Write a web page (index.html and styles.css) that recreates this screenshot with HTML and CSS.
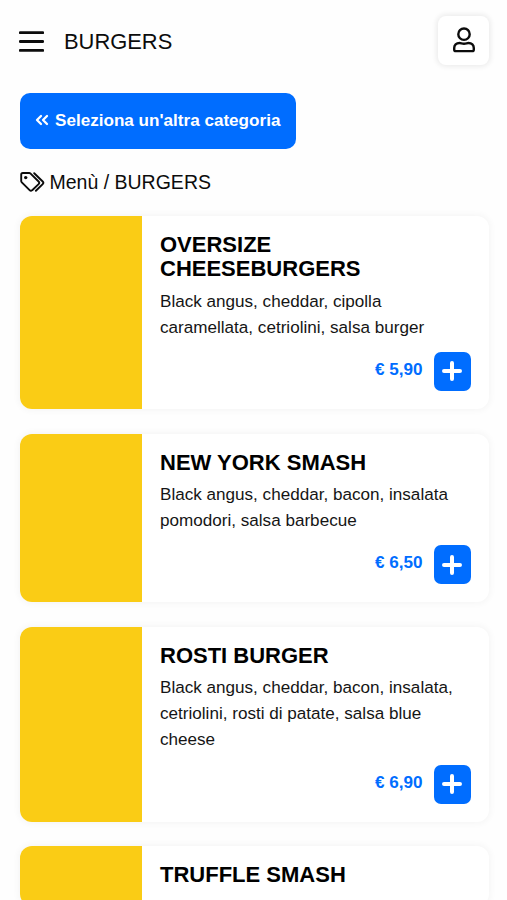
FILE: index.html
```html
<!DOCTYPE html>
<html lang="it">
<head>
<meta charset="utf-8">
<meta name="viewport" content="width=device-width, initial-scale=1">
<title>BURGERS</title>
<link rel="stylesheet" href="styles.css">
</head>
<body>
<svg class="sprite" aria-hidden="true">
  <symbol id="plus" viewBox="0 0 20 20"><path d="M10 2v16M2 10h16" fill="none" stroke="currentColor" stroke-width="4" stroke-linecap="round"/></symbol>
</svg>
<header class="topbar">
  <svg class="menu-icon" viewBox="0 0 24 22"><path d="M1.200 2.500h21.600M1.200 11h21.600M1.200 19.500h21.600"/></svg>
  <h1 class="page-title">BURGERS</h1>
  <button class="account" aria-label="Account">
    <svg class="user-icon" viewBox="0 0 24 26"><circle cx="12" cy="7.200" r="5.700"/><path d="M7.600 16C4.200 16 2.200 18.200 2.200 21v1.400c0 1 .7 1.700 1.700 1.700h16.200c1 0 1.700-.7 1.700-1.700V21c0-2.800-2-5-5.400-5-1.400 0-2.400.7-4.400.7S9 16 7.600 16z"/></svg>
  </button>
</header>
<main>
  <a class="back"><svg class="chevrons" viewBox="0 0 14 12"><path d="M6 2L2 6l4 4M12 2L8 6l4 4"/></svg><span>Seleziona un'altra categoria</span></a>
  <nav class="crumbs">
    <svg class="tags-icon" viewBox="0 0 25 20"><path d="M1.200 2.600v6.300c0 .6.2 1 .6 1.400l7.800 7.900c.8.8 1.800.8 2.600 0l6.400-6.100c.8-.8.8-1.800 0-2.600l-8-7.900c-.4-.4-.8-.6-1.400-.6H2.800c-.9 0-1.600.7-1.600 1.600z"/><path d="M14.200 1.200l8.500 8.300c.8.8.8 1.800 0 2.600L15.900 18.800"/><circle class="dot" cx="5.700" cy="5.600" r="1.700"/></svg>
    <span>Menù / BURGERS</span>
  </nav>
  <section class="list">
    <article class="card">
      <div class="thumb"></div>
      <div class="info">
        <h2>OVERSIZE CHEESEBURGERS</h2>
        <p>Black angus, cheddar, cipolla caramellata, cetriolini, salsa burger</p>
        <div class="buy"><span class="price">€ 5,90</span><button class="add" aria-label="Aggiungi"><svg><use href="#plus"/></svg></button></div>
      </div>
    </article>
    <article class="card">
      <div class="thumb"></div>
      <div class="info">
        <h2>NEW YORK SMASH</h2>
        <p>Black angus, cheddar, bacon, insalata pomodori, salsa barbecue</p>
        <div class="buy"><span class="price">€ 6,50</span><button class="add" aria-label="Aggiungi"><svg><use href="#plus"/></svg></button></div>
      </div>
    </article>
    <article class="card">
      <div class="thumb"></div>
      <div class="info">
        <h2>ROSTI BURGER</h2>
        <p>Black angus, cheddar, bacon, insalata, cetriolini, rosti di patate, salsa blue cheese</p>
        <div class="buy"><span class="price">€ 6,90</span><button class="add" aria-label="Aggiungi"><svg><use href="#plus"/></svg></button></div>
      </div>
    </article>
    <article class="card">
      <div class="thumb"></div>
      <div class="info">
        <h2>TRUFFLE SMASH</h2>
      </div>
    </article>
  </section>
</main>
</body>
</html>
```
FILE: styles.css
```css
* { box-sizing: border-box; }
body {
  margin: 0;
  height: 900px;
  overflow: hidden;
  background: #fefefe;
  color: #0c0c0c;
  font-family: "Liberation Sans", Arial, sans-serif;
}
svg { display: block; flex: none; }
h1, h2, p { margin: 0; }
button { border: 0; padding: 0; font: inherit; color: inherit; }
.sprite { width: 0; height: 0; position: absolute; }
.topbar { display: flex; align-items: center; height: 81px; padding: 0 18px 0 19px; }
.menu-icon { width: 25px; height: 23px; margin-top: 1px; fill: none; stroke: #0c0c0c; stroke-width: 2.700; stroke-linecap: round; }
.page-title { margin-left: 20px; padding-top: 2px; font-size: 21.900px; font-weight: 400; line-height: 26px; }
.account {
  display: grid;
  place-items: center;
  width: 51px;
  height: 49px;
  margin-left: auto;
  padding: 0 0 2px 0;
  border-radius: 8px;
  background: #fff;
  box-shadow: 0 0 5px 2px rgba(0, 0, 0, .07);
}
.user-icon { width: 24px; height: 26px; fill: none; stroke: #0c0c0c; stroke-width: 2.400; }
main { padding: 12px 18px 0 19.500px; }
.back {
  display: flex;
  align-items: center;
  gap: 6px;
  width: 276.500px;
  height: 55.500px;
  padding: 0 0 1px 15.500px;
  border-radius: 10px;
  background: #006dff;
  color: #fff;
  font-size: 17.100px;
  font-weight: 700;
  white-space: nowrap;
}
.back span { padding-top: 1px; }
.chevrons { width: 14px; height: 12px; fill: none; stroke: #fff; stroke-width: 2.300; stroke-linecap: round; stroke-linejoin: round; }
.crumbs { display: flex; align-items: center; gap: 5px; height: 67.500px; font-size: 19.500px; }
.tags-icon { width: 25px; height: 20px; fill: none; stroke: #0c0c0c; stroke-width: 1.900; stroke-linejoin: round; stroke-linecap: round; }
.tags-icon .dot { fill: #0c0c0c; stroke: none; }
.list { display: grid; gap: 24.500px; }
.card {
  display: grid;
  grid-template-columns: 122px 1fr;
  border-radius: 12px;
  overflow: hidden;
  background: #fff;
  box-shadow: 0 0 6px 2px rgba(0, 0, 0, .035);
}
.thumb { background: #facc15; }
.info { padding: 17px 18px 18.200px 18.500px; }
h2 { font-size: 22px; line-height: 24.200px; color: #000; }
p { margin-top: 7.300px; font-size: 17.100px; line-height: 25.900px; color: #151515; }
.buy { display: flex; justify-content: flex-end; align-items: center; gap: 11px; margin-top: 11.400px; }
.price { padding-bottom: 3px; color: #006dff; font-size: 17.100px; font-weight: 700; }
.add { display: grid; place-items: center; width: 37.500px; height: 39px; border-radius: 7px; background: #006dff; color: #fff; }
.add svg { width: 20px; height: 20px; }
```
